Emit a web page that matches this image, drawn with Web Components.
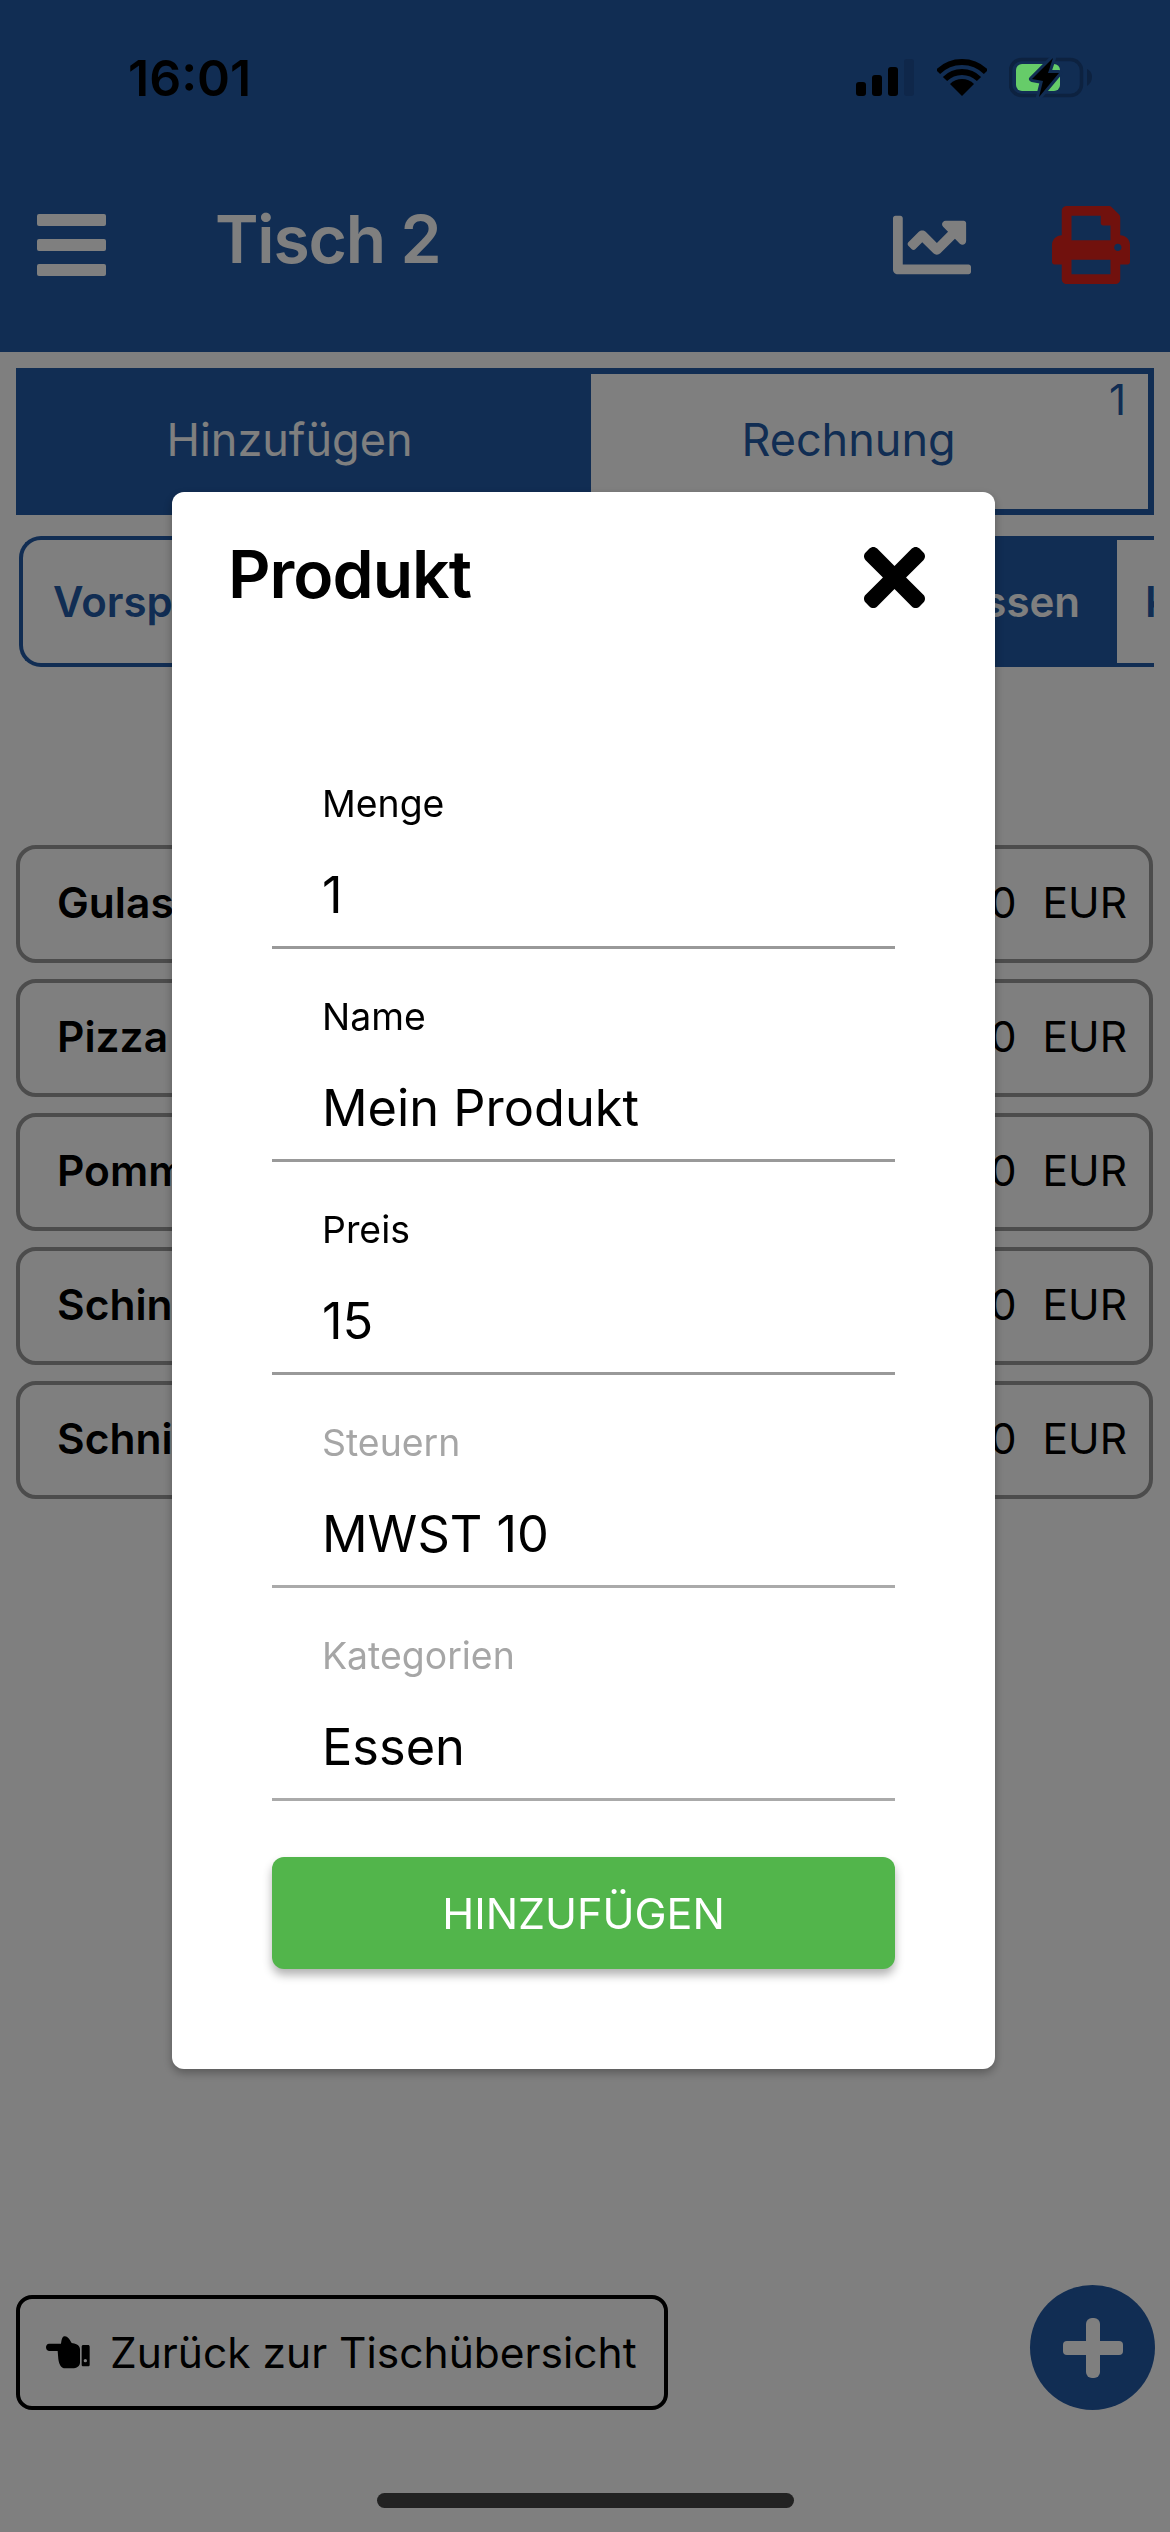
<!DOCTYPE html>
<html lang="de">
<head>
<meta charset="utf-8">
<title>Tisch 2</title>
<style>
    html, body { margin: 0; padding: 0; background: #ffffff; }
    body { font-family: "Inter", "Liberation Sans", sans-serif; }
</style>
</head>
<body>
<pos-page>
    <app-header slot="header">
        <status-bar slot="status">16:01</status-bar>
        Tisch 2
    </app-header>
    <tab-switch slot="tabs" badge="1">
        <span slot="left">Hinzufügen</span>
        <span slot="right">Rechnung</span>
    </tab-switch>
    <category-strip slot="categories">
        <category-tab>Vorspeise</category-tab>
        <category-tab active>Essen</category-tab>
        <category-tab cut>Kaffee</category-tab>
    </category-strip>
    <product-row slot="list"><span slot="name">Gulasch</span><span slot="price">5,00</span></product-row>
    <product-row slot="list"><span slot="name">Pizza</span><span slot="price">8,00</span></product-row>
    <product-row slot="list"><span slot="name">Pommes</span><span slot="price">3,00</span></product-row>
    <product-row slot="list"><span slot="name">Schinken</span><span slot="price">6,00</span></product-row>
    <product-row slot="list"><span slot="name">Schnitzel</span><span slot="price">9,00</span></product-row>
    <back-button slot="back">Zurück zur Tischübersicht</back-button>
    <add-fab slot="fab"></add-fab>
</pos-page>

<modal-dialog>
    <span slot="title">Produkt</span>
    <form-field label="Menge">1</form-field>
    <form-field label="Name">Mein Produkt</form-field>
    <form-field label="Preis">15</form-field>
    <form-field label="Steuern" disabled>MWST 10</form-field>
    <form-field label="Kategorien" disabled>Essen</form-field>
    <span slot="action">HINZUFÜGEN</span>
</modal-dialog>

<home-indicator></home-indicator>

<script>
const PRIMARY = '#225aa6';

class PosPage extends HTMLElement {
    constructor() {
        super();
        this.attachShadow({ mode: 'open' });
        this.shadowRoot.innerHTML = `
            <style>
                :host {
                    display: flex;
                    flex-direction: column;
                    width: 1170px;
                    height: 2532px;
                    background: #ffffff;
                    overflow: hidden;
                }
                .tabs { padding: 16px 16px 0; }
                .categories { padding: 21px 16px 0 19px; }
                .list {
                    display: flex;
                    flex-direction: column;
                    gap: 16px;
                    padding: 178px 17px 0 16px;
                }
                .footer {
                    margin-top: auto;
                    display: flex;
                    justify-content: space-between;
                    align-items: flex-end;
                    padding: 0 15px 122px 16px;
                }
            </style>
            <slot name="header"></slot>
            <div class="tabs"><slot name="tabs"></slot></div>
            <div class="categories"><slot name="categories"></slot></div>
            <div class="list"><slot name="list"></slot></div>
            <div class="footer">
                <slot name="back"></slot>
                <slot name="fab"></slot>
            </div>
        `;
    }
}

class AppHeader extends HTMLElement {
    constructor() {
        super();
        this.attachShadow({ mode: 'open' });
        this.shadowRoot.innerHTML = `
            <style>
                :host {
                    display: block;
                    height: 352px;
                    background: ${PRIMARY};
                    color: #ffffff;
                }
                .bar {
                    display: flex;
                    align-items: center;
                    height: 214px;
                    padding: 0 40px 0 37px;
                }
                .burger {
                    display: flex;
                    flex-direction: column;
                    gap: 13px;
                    width: 69px;
                }
                .burger i {
                    display: block;
                    height: 12px;
                    border-radius: 2px;
                    background: #ffffff;
                }
                .title {
                    flex: 1;
                    margin: 0 0 12px 109px;
                    font-size: 66px;
                    line-height: 80px;
                    font-weight: 600;
                    letter-spacing: -1.2px;
                }
                svg { display: block; fill: currentColor; }
                .chart { width: 78px; height: 78px; margin-right: 81px; }
                .print { width: 78px; height: 78px; color: #e2231a; }
            </style>
            <slot name="status"></slot>
            <div class="bar">
                <div class="burger"><i></i><i></i><i></i></div>
                <div class="title"><slot></slot></div>
                <svg class="chart" viewBox="0 32 512 448"><path d="M496 384H64V80c0-8.84-7.16-16-16-16H16C7.16 64 0 71.16 0 80v336c0 17.67 14.33 32 32 32h464c8.84 0 16-7.16 16-16v-32c0-8.84-7.16-16-16-16zM464 96H345.94c-21.38 0-32.09 25.85-16.97 40.97l32.4 32.4L288 242.75l-73.37-73.37c-12.5-12.5-32.76-12.5-45.25 0l-68.69 68.69c-6.25 6.25-6.25 16.38 0 22.63l22.62 22.62c6.25 6.25 16.38 6.25 22.63 0L192 237.25l73.37 73.37c12.5 12.5 32.76 12.5 45.25 0l96-96 32.4 32.4c15.12 15.12 40.97 4.41 40.97-16.97V112c0-8.84-7.16-16-16-16z"/></svg>
                <svg class="print" viewBox="0 0 512 512"><path d="M448 192V77.25c0-8.49-3.37-16.62-9.37-22.63L393.37 9.37c-6-6-14.14-9.37-22.63-9.37H96C78.33 0 64 14.33 64 32v160c-35.35 0-64 28.65-64 64v112c0 8.84 7.16 16 16 16h48v96c0 17.67 14.33 32 32 32h320c17.67 0 32-14.33 32-32v-96h48c8.84 0 16-7.16 16-16V256c0-35.35-28.65-64-64-64zm-64 256H128v-96h256v96zm0-224H128V64h192v48c0 8.84 7.16 16 16 16h48v96zm48 72c-13.25 0-24-10.75-24-24 0-13.26 10.75-24 24-24s24 10.74 24 24c0 13.25-10.75 24-24 24z"/></svg>
            </div>
        `;
    }
}

// sits above the dimming overlay, its colours are already the dimmed ones
class StatusBar extends HTMLElement {
    constructor() {
        super();
        this.attachShadow({ mode: 'open' });
        this.shadowRoot.innerHTML = `
            <style>
                :host {
                    display: flex;
                    position: relative;
                    z-index: 2;
                    height: 138px;
                    box-sizing: border-box;
                    padding: 58px 77px 0 128px;
                    color: #000000;
                }
                .time {
                    flex: 1;
                    font-size: 50px;
                    line-height: 40px;
                    font-weight: 600;
                }
                svg { display: block; flex: none; }
            </style>
            <div class="time"><slot></slot></div>
            <svg width="58" height="38" viewBox="0 0 58 38" style="margin-right:23px">
                <rect x="0" y="24" width="10" height="14" rx="3"/>
                <rect x="16" y="17" width="10" height="21" rx="3"/>
                <rect x="32" y="9" width="10" height="29" rx="3"/>
                <rect x="48" y="1" width="10" height="37" rx="3" fill="#0f274a"/>
            </svg>
            <svg width="50" height="38" viewBox="0 0 50 38" style="margin-right:22px">
                <path d="M25 38 L13 26 A17 17 0 0 1 37 26 Z"/>
                <path d="M8 21 A24 24 0 0 1 42 21" fill="none" stroke="#000" stroke-width="6"/>
                <path d="M1 14 A34 34 0 0 1 49 14" fill="none" stroke="#000" stroke-width="6"/>
            </svg>
            <svg width="84" height="42" viewBox="0 0 84 42" style="margin-top:-1px">
                <rect x="1.5" y="2.5" width="71" height="36" rx="11" fill="none" stroke="#0d2240" stroke-width="3.5"/>
                <path d="M78 12 C82 14 83 17 83 20 C83 24 81 27 78 29 Z" fill="#0d2240"/>
                <rect x="7" y="7" width="44" height="27" rx="6" fill="#66cc69"/>
                <path d="M44 1 L23 22 L34 24 L30 40 L50 16 L39 16 Z" fill="#000" stroke="#112d53" stroke-width="6" paint-order="stroke" stroke-linejoin="round"/>
            </svg>
        `;
    }
}

class TabSwitch extends HTMLElement {
    constructor() {
        super();
        this.attachShadow({ mode: 'open' });
        this.shadowRoot.innerHTML = `
            <style>
                :host {
                    display: flex;
                    position: relative;
                    height: 147px;
                    box-sizing: border-box;
                    border: 6px solid ${PRIMARY};
                    font-size: 45px;
                }
                .cell {
                    display: flex;
                    align-items: center;
                    justify-content: center;
                    box-sizing: border-box;
                    padding-bottom: 5px;
                }
                .left {
                    flex: none;
                    width: 569px;
                    padding-right: 34px;
                    background: ${PRIMARY};
                    color: #ffffff;
                }
                .right {
                    flex: 1;
                    padding-right: 42px;
                    color: ${PRIMARY};
                }
                .badge {
                    position: absolute;
                    top: 1px;
                    right: 22px;
                    font-size: 42px;
                    line-height: 50px;
                    color: ${PRIMARY};
                }
            </style>
            <div class="cell left"><slot name="left"></slot></div>
            <div class="cell right"><slot name="right"></slot></div>
            <div class="badge">${this.getAttribute('badge')}</div>
        `;
    }
}

class CategoryStrip extends HTMLElement {
    constructor() {
        super();
        this.attachShadow({ mode: 'open' });
        this.shadowRoot.innerHTML = `
            <style>
                :host {
                    display: flex;
                    height: 131px;
                    overflow: hidden;
                }
            </style>
            <slot></slot>
        `;
    }
}

class CategoryTab extends HTMLElement {
    constructor() {
        super();
        this.attachShadow({ mode: 'open' });
        this.shadowRoot.innerHTML = `
            <style>
                :host {
                    display: flex;
                    align-items: center;
                    box-sizing: border-box;
                    flex: 1;
                    min-width: 0;
                    padding-left: 30px;
                    border: 4px solid ${PRIMARY};
                    border-right: none;
                    border-radius: 22px 0 0 22px;
                    font-size: 42px;
                    font-weight: 600;
                    color: ${PRIMARY};
                    white-space: nowrap;
                }
                :host([active]) {
                    flex: none;
                    padding: 0 37px;
                    border-radius: 0;
                    background: ${PRIMARY};
                    color: #ffffff;
                }
                :host([cut]) {
                    flex: 0 0 37px;
                    padding-left: 28px;
                    border-left: none;
                    border-radius: 0;
                }
            </style>
            <slot></slot>
        `;
    }
}

class ProductRow extends HTMLElement {
    constructor() {
        super();
        this.attachShadow({ mode: 'open' });
        this.shadowRoot.innerHTML = `
            <style>
                :host {
                    display: flex;
                    align-items: center;
                    justify-content: space-between;
                    box-sizing: border-box;
                    height: 118px;
                    padding: 0 22px 4px 37px;
                    border: 4px solid #999999;
                    border-radius: 20px;
                    font-size: 42.5px;
                    color: #000000;
                }
                .name { font-weight: 600; }
                .price { display: flex; gap: 26px; }
            </style>
            <div class="name"><slot name="name"></slot></div>
            <div class="price"><slot name="price"></slot><span>EUR</span></div>
        `;
    }
}

class BackButton extends HTMLElement {
    constructor() {
        super();
        this.attachShadow({ mode: 'open' });
        this.shadowRoot.innerHTML = `
            <style>
                :host {
                    display: flex;
                    align-items: center;
                    box-sizing: border-box;
                    width: 652px;
                    height: 115px;
                    padding-left: 26px;
                    border: 4px solid #000000;
                    border-radius: 16px;
                    font-size: 42.5px;
                    color: #000000;
                    white-space: nowrap;
                }
                svg { display: block; flex: none; margin-right: 18px; }
            </style>
            <svg width="46" height="36" viewBox="33 28 138 108">
                <path d="M42 54 H78 C80 44 80 34 88 32 C96 30 104 40 110 52 C120 54 134 56 135 70 V110 C135 122 125 128 112 128 H90 C80 128 72 118 70 100 L68 76 H42 C30 76 30 54 42 54Z"/>
                <path fill-rule="evenodd" d="M145 58 H159 C162 58 164 60 164 63 V117 C164 120 162 122 159 122 H145 C142 122 140 120 140 117 V63 C140 60 142 58 145 58Z M151 100 A5 5 0 1 0 151.01 110 A5 5 0 1 0 151 100Z"/>
            </svg>
            <slot></slot>
        `;
    }
}

class AddFab extends HTMLElement {
    constructor() {
        super();
        this.attachShadow({ mode: 'open' });
        this.shadowRoot.innerHTML = `
            <style>
                :host {
                    display: flex;
                    align-items: center;
                    justify-content: center;
                    width: 125px;
                    height: 125px;
                    border-radius: 50%;
                    background: ${PRIMARY};
                }
                svg { display: block; fill: #ffffff; }
            </style>
            <svg width="60" height="60" viewBox="0 0 60 60">
                <rect x="23" y="0" width="14" height="60" rx="6"/>
                <rect x="0" y="23" width="60" height="14" rx="4"/>
            </svg>
        `;
    }
}

class ModalDialog extends HTMLElement {
    constructor() {
        super();
        this.attachShadow({ mode: 'open' });
        this.shadowRoot.innerHTML = `
            <style>
                :host {
                    display: flex;
                    align-items: flex-start;
                    justify-content: center;
                    position: fixed;
                    top: 0;
                    left: 0;
                    right: 0;
                    bottom: 0;
                    z-index: 1;
                    box-sizing: border-box;
                    padding: 492px 3px 0 0;
                    background: rgba(0, 0, 0, 0.5);
                }
                .box {
                    box-sizing: border-box;
                    width: 823px;
                    height: 1577px;
                    padding-top: 42px;
                    border-radius: 12px;
                    background: #ffffff;
                    box-shadow: 0 4px 10px rgba(0, 0, 0, 0.3);
                }
                .head {
                    display: flex;
                    align-items: center;
                    justify-content: space-between;
                    height: 80px;
                    padding: 0 70px 0 56px;
                    font-size: 66px;
                    font-weight: 600;
                    letter-spacing: -1px;
                    color: #000000;
                }
                .head svg { display: block; margin-top: 6px; }
                .body {
                    display: flex;
                    flex-direction: column;
                    padding: 122px 100px 0;
                }
                .action {
                    display: flex;
                    align-items: center;
                    justify-content: center;
                    height: 112px;
                    margin-top: 56px;
                    border-radius: 12px;
                    background: #52b54b;
                    box-shadow: 0 6px 10px rgba(0, 0, 0, 0.3);
                    font-size: 43px;
                    color: #ffffff;
                }
            </style>
            <div class="box">
                <div class="head">
                    <slot name="title"></slot>
                    <svg width="61" height="61" viewBox="0 80 352 352"><path d="M242.72 256l100.07-100.07c12.28-12.28 12.28-32.19 0-44.48l-22.24-22.24c-12.28-12.28-32.19-12.28-44.48 0L176 189.28 75.93 89.21c-12.28-12.28-32.19-12.28-44.48 0L9.21 111.45c-12.28 12.28-12.28 32.19 0 44.48L109.28 256 9.21 356.07c-12.28 12.28-12.28 32.19 0 44.48l22.24 22.24c12.28 12.28 32.2 12.28 44.48 0L176 322.72l100.07 100.07c12.28 12.28 32.2 12.28 44.48 0l22.24-22.24c12.28-12.28 12.28-32.19 0-44.48L242.72 256z"/></svg>
                </div>
                <div class="body">
                    <slot></slot>
                    <div class="action"><slot name="action"></slot></div>
                </div>
            </div>
        `;
    }
}

class FormField extends HTMLElement {
    constructor() {
        super();
        this.attachShadow({ mode: 'open' });
        this.shadowRoot.innerHTML = `
            <style>
                :host {
                    display: block;
                    box-sizing: border-box;
                    height: 213px;
                    padding: 46px 0 21px 50px;
                    border-bottom: 3px solid #999999;
                    color: #000000;
                }
                :host([disabled]) { border-bottom-color: #aaaaaa; }
                :host([disabled]) .label { color: #a6a6a6; }
                .label { font-size: 37.4px; line-height: 44px; }
                .value { margin-top: 39px; font-size: 50.5px; line-height: 60px; }
            </style>
            <div class="label">${this.getAttribute('label')}</div>
            <div class="value"><slot></slot></div>
        `;
    }
}

class HomeIndicator extends HTMLElement {
    constructor() {
        super();
        this.attachShadow({ mode: 'open' });
        this.shadowRoot.innerHTML = `
            <style>
                :host {
                    display: block;
                    position: fixed;
                    left: 377px;
                    top: 2493px;
                    z-index: 2;
                    width: 417px;
                    height: 15px;
                    border-radius: 8px;
                    background: #222222;
                }
            </style>
        `;
    }
}

customElements.define('pos-page', PosPage);
customElements.define('app-header', AppHeader);
customElements.define('status-bar', StatusBar);
customElements.define('tab-switch', TabSwitch);
customElements.define('category-strip', CategoryStrip);
customElements.define('category-tab', CategoryTab);
customElements.define('product-row', ProductRow);
customElements.define('back-button', BackButton);
customElements.define('add-fab', AddFab);
customElements.define('modal-dialog', ModalDialog);
customElements.define('form-field', FormField);
customElements.define('home-indicator', HomeIndicator);
</script>
</body>
</html>
